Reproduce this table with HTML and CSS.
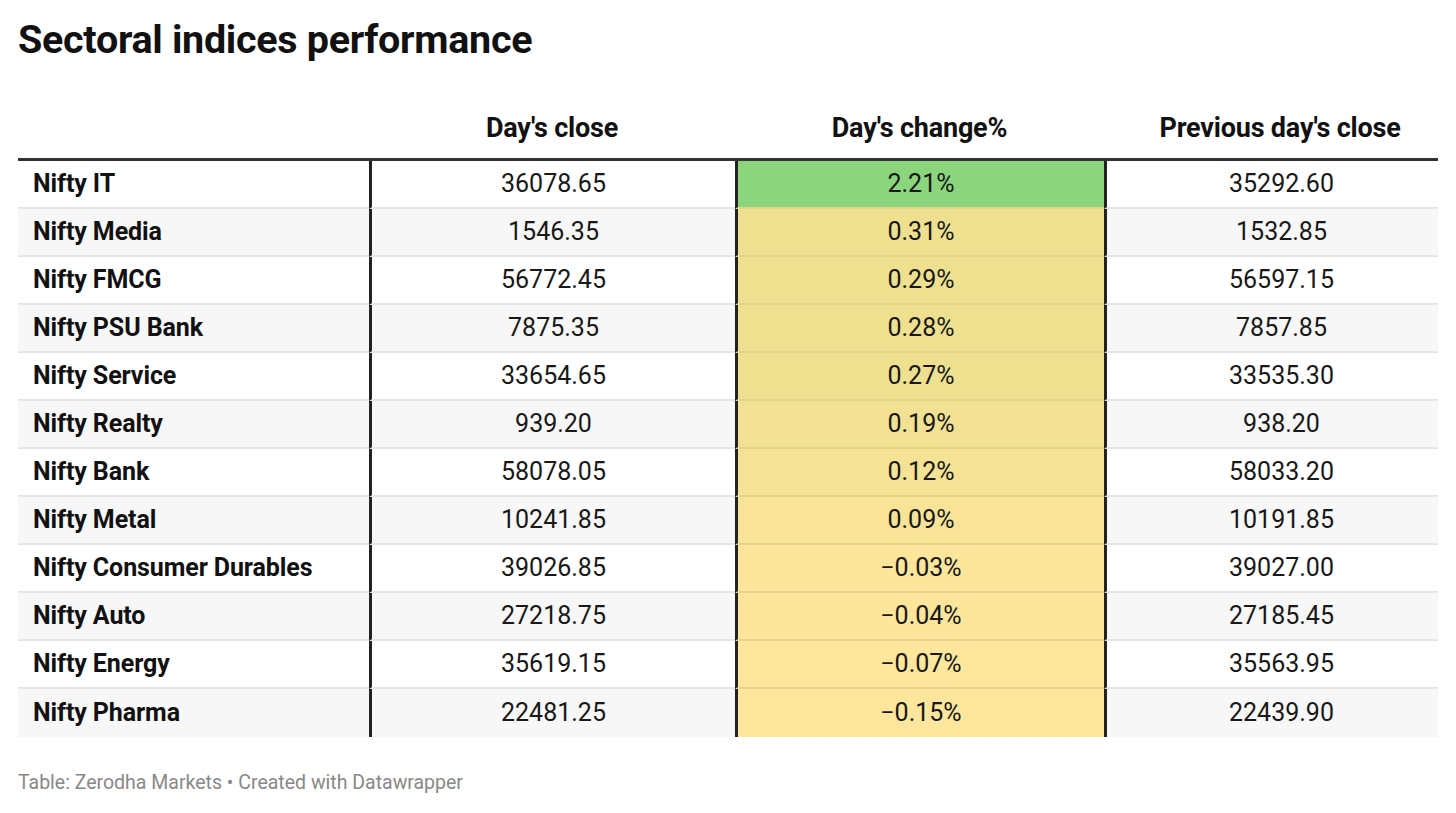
FILE: index.html
```html
<!DOCTYPE html>
<html>
<head>
<meta charset="utf-8">
<link rel="stylesheet" href="styles.css">
</head>
<body>
<div class="chart">
  <h1 class="title">Sectoral indices performance</h1>
  <table class="tbl">
    <colgroup>
      <col class="c1"><col class="c2"><col class="c3"><col class="c4">
    </colgroup>
    <thead>
      <tr>
        <th></th>
        <th>Day's close</th>
        <th>Day's change%</th>
        <th class="last">Previous day's close</th>
      </tr>
    </thead>
    <tbody>
      <tr><td class="name">Nifty IT</td><td class="v">36078.65</td><td class="v chg" style="background:#8bd57c">2.21%</td><td class="v last">35292.60</td></tr>
      <tr><td class="name">Nifty Media</td><td class="v">1546.35</td><td class="v chg" style="background:#eee08f">0.31%</td><td class="v last">1532.85</td></tr>
      <tr><td class="name">Nifty FMCG</td><td class="v">56772.45</td><td class="v chg" style="background:#eee08f">0.29%</td><td class="v last">56597.15</td></tr>
      <tr><td class="name">Nifty PSU Bank</td><td class="v">7875.35</td><td class="v chg" style="background:#efe08f">0.28%</td><td class="v last">7857.85</td></tr>
      <tr><td class="name">Nifty Service</td><td class="v">33654.65</td><td class="v chg" style="background:#efe090">0.27%</td><td class="v last">33535.30</td></tr>
      <tr><td class="name">Nifty Realty</td><td class="v">939.20</td><td class="v chg" style="background:#f2e192">0.19%</td><td class="v last">938.20</td></tr>
      <tr><td class="name">Nifty Bank</td><td class="v">58078.05</td><td class="v chg" style="background:#f6e295">0.12%</td><td class="v last">58033.20</td></tr>
      <tr><td class="name">Nifty Metal</td><td class="v">10241.85</td><td class="v chg" style="background:#f8e397">0.09%</td><td class="v last">10191.85</td></tr>
      <tr><td class="name">Nifty Consumer Durables</td><td class="v">39026.85</td><td class="v chg" style="background:#fde59b">−0.03%</td><td class="v last">39027.00</td></tr>
      <tr><td class="name">Nifty Auto</td><td class="v">27218.75</td><td class="v chg" style="background:#fde59b">−0.04%</td><td class="v last">27185.45</td></tr>
      <tr><td class="name">Nifty Energy</td><td class="v">35619.15</td><td class="v chg" style="background:#fee69c">−0.07%</td><td class="v last">35563.95</td></tr>
      <tr><td class="name">Nifty Pharma</td><td class="v">22481.25</td><td class="v chg" style="background:#fee69d">−0.15%</td><td class="v last">22439.90</td></tr>
    </tbody>
  </table>
  <div class="footer">Table: Zerodha Markets • Created with Datawrapper</div>
</div>
</body>
</html>
```

FILE: styles.css
```css
html, body {
  margin: 0;
  padding: 0;
  background: #ffffff;
}

body {
  font-family: Roboto, "Liberation Sans", Arial, sans-serif;
  color: #181818;
}

.chart {
  padding: 16px 18px 0 18px;
}

.title {
  margin: 0;
  font-size: 39.5px;
  font-weight: 700;
  line-height: 48px;
  color: #111111;
  letter-spacing: -0.3px;
}

.tbl {
  margin-top: 30px;
  width: 1420px;
  table-layout: fixed;
  border-collapse: separate;
  border-spacing: 0;
  font-size: 25px;
}

.c1 { width: 351px; }
.c2 { width: 366px; }
.c3 { width: 369px; }
.c4 { width: 334px; }

.tbl th {
  font-size: 27px;
  font-weight: 700;
  text-align: center;
  padding: 0 0 14px 0;
  height: 50px;
  vertical-align: bottom;
  border-bottom: 3px solid #333333;
  color: #111111;
  line-height: 32px;
  letter-spacing: -0.2px;
}

.tbl td {
  height: 46px;
  padding: 0;
  border-bottom: 2px solid #e6e6e6;
  line-height: 46px;
  box-sizing: content-box;
}

.tbl tbody tr:nth-child(even) td {
  background: #f7f7f7;
}

.tbl tbody tr:last-child td {
  border-bottom: none;
  height: 48px;
}

.tbl td.name {
  font-weight: 700;
  padding-left: 15px;
  color: #111111;
  letter-spacing: -0.1px;
}

.tbl td.v {
  text-align: center;
  border-left: 3px solid #222222;
}

.tbl td.chg {
  border-bottom-color: #e3d48c;
}

.tbl .last {
  padding-left: 18px;
}

.footer {
  margin-top: 34px;
  font-size: 19.5px;
  color: #888888;
}
```
